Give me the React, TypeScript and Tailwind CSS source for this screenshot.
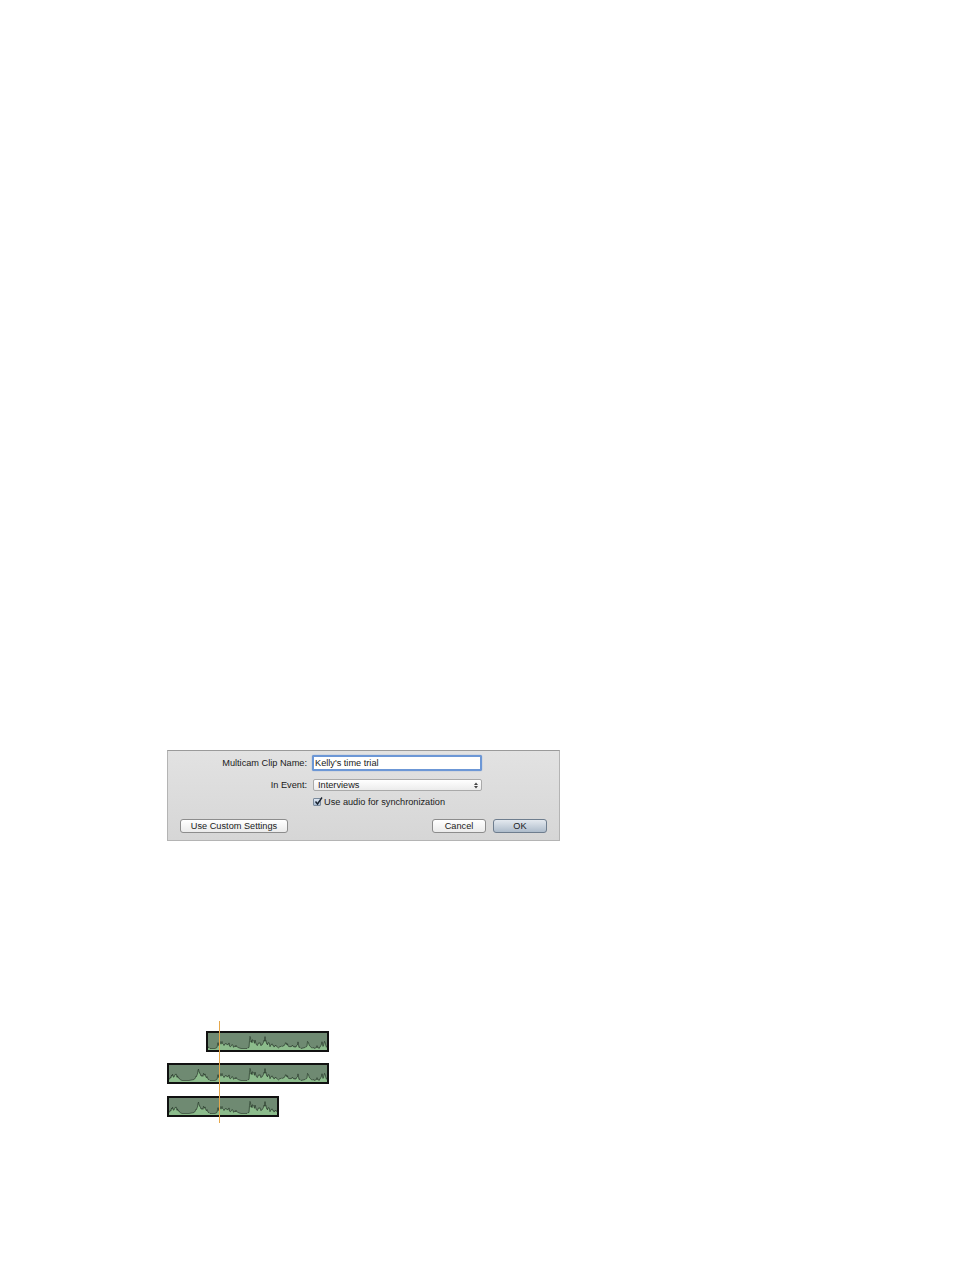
import React from "react";

const font = { fontFamily: '"Liberation Sans", Arial, sans-serif' };

// waveform keypoints: [absolute x, height]
const keys: [number, number][] = [
  [168, 1], [170, 2], [172, 6], [173, 8], [175, 6], [177, 9], [179, 5], [181, 2], [183, 1], [190, 1], [195, 2],
  [197, 6], [199, 14], [201, 8], [203, 6], [205, 10], [207, 7], [209, 3], [211, 1], [216, 1], [218, 2],
  [219, 8], [220, 5], [221, 10], [222, 6], [223, 9], [225, 5], [226, 8], [228, 6], [230, 7], [231, 4],
  [233, 6], [235, 3], [237, 5], [239, 2], [242, 1], [248, 1], [250, 3], [251, 15], [252, 10], [253, 11],
  [255, 8], [256, 10], [258, 6], [260, 9], [262, 5], [264, 10], [266, 13], [268, 7], [270, 9], [271, 4],
  [273, 8], [275, 3], [277, 5], [279, 2], [281, 3], [283, 5], [285, 4], [287, 8], [289, 5], [291, 3],
  [293, 5], [295, 3], [297, 4], [299, 8], [300, 3], [302, 1], [306, 2], [308, 5], [309, 12], [310, 6],
  [312, 3], [314, 2], [316, 1], [318, 4], [320, 1], [322, 6], [323, 9], [324, 4], [326, 10], [327, 4],
  [330, 2],
];

function level(x: number) {
  for (let i = 0; i < keys.length - 1; i++) {
    const [xa, va] = keys[i];
    const [xb, vb] = keys[i + 1];
    if (x >= xa && x <= xb) return va + ((vb - va) * (x - xa)) / (xb - xa);
  }
  return 1;
}

// per half-pixel samples with a little jitter
const samples: [number, number][] = [];
for (let x = 168; x <= 330; x += 0.5) {
  const r = Math.abs(Math.sin(x * 12.9898) * 43758.5453) % 1;
  const v = level(x);
  samples.push([x, v > 2 ? v * (0.6 + 0.4 * r) : v]);
}

function Clip({ left, width }: { left: number; width: number }) {
  const inner = width - 4;
  const x0 = left + 2;
  const h = 17;
  const line = samples.map(([x, v]) => `${x},${(h - 0.5 - v).toFixed(2)}`).join(" ");
  const area = `168,${h} ${line} 330,${h}`;
  return (
    <div
      className="h-[21px] border-2 border-[#111] bg-[#6f8a72]"
      style={{ marginLeft: left - 168, width }}
    >
      <svg width={inner} height={h} viewBox={`${x0} 0 ${inner} ${h}`} className="block">
        <polygon points={area} fill="#8cbc8c" />
        <polyline points={line} fill="none" stroke="#26352a" strokeWidth="0.7" />
      </svg>
    </div>
  );
}

export default function App() {
  return (
    <div className="min-h-[1263px] w-[953px] bg-white pl-[167px] pt-[750px]" style={font}>
      <div className="h-[91px] w-[393px] border border-[#b4b4b4] border-t-[#9a9a9a] bg-gradient-to-b from-[#e2e2e2] to-[#d6d6d6] pt-[4px] text-[9.2px] text-[#1a1a1a]">
        <div className="flex h-[16px] items-center">
          <span className="w-[139px] pt-px text-right">Multicam Clip Name:</span>
          <div className="ml-[5px] flex h-[16px] w-[170px] items-center rounded-[2px] border-2 border-[#6c97d6] bg-white pl-[1px] pt-px shadow-[0_0_1px_#4a7bc8]">
            Kelly&apos;s time trial
          </div>
        </div>
        <div className="mt-[8px] flex h-[12px] items-center">
          <span className="w-[139px] pt-px text-right">In Event:</span>
          <div className="ml-[6px] flex h-[12px] w-[169px] items-center justify-between rounded-[2px] border border-[#a9a9a9] bg-gradient-to-b from-white to-[#ececec] pl-[4px] pr-[3px]">
            <span className="pt-px">Interviews</span>
            <svg width="4" height="7" viewBox="0 0 4 7">
              <path d="M0 3 L2 0.5 L4 3 Z M0 4 L2 6.5 L4 4 Z" fill="#444" />
            </svg>
          </div>
        </div>
        <div className="mt-[6px] flex h-[10px] items-center pl-[145px]">
          <div className="relative h-[8px] w-[8px] rounded-[1px] border border-[#7a8a9c] bg-gradient-to-b from-[#dfe8f3] to-[#a9bcd3]">
            <svg className="absolute -top-[2px] left-0" width="9" height="9" viewBox="0 0 9 9">
              <path d="M1.5 4.5 L3.5 7 L8 0.5" fill="none" stroke="#1a2330" strokeWidth="1.4" />
            </svg>
          </div>
          <span className="ml-[3px] pt-px">Use audio for synchronization</span>
        </div>
        <div className="mt-[12px] flex items-center pl-[12px] pr-[12px]">
          <button className="flex h-[14px] w-[108px] items-center justify-center rounded-[3px] border border-[#8c8c8c] bg-gradient-to-b from-white to-[#ebebeb] pt-px">
            Use Custom Settings
          </button>
          <button className="ml-auto flex h-[14px] w-[54px] items-center justify-center rounded-[3px] border border-[#8c8c8c] bg-gradient-to-b from-white to-[#ebebeb] pt-px">
            Cancel
          </button>
          <button className="ml-[7px] flex h-[14px] w-[54px] items-center justify-center rounded-[3px] border border-[#6e7d8e] bg-gradient-to-b from-[#e4e9ef] to-[#aebccb] pt-px">
            OK
          </button>
        </div>
      </div>

      <div className="relative mt-[180px] w-[163px]">
        <div className="pt-[10px]">
          <Clip left={207} width={123} />
          <div className="mt-[11px]">
            <Clip left={168} width={162} />
          </div>
          <div className="mt-[12px]">
            <Clip left={168} width={112} />
          </div>
        </div>
        <div className="absolute left-[52px] top-0 h-[102px] w-px bg-[#e6a84c]" />
      </div>
    </div>
  );
}
